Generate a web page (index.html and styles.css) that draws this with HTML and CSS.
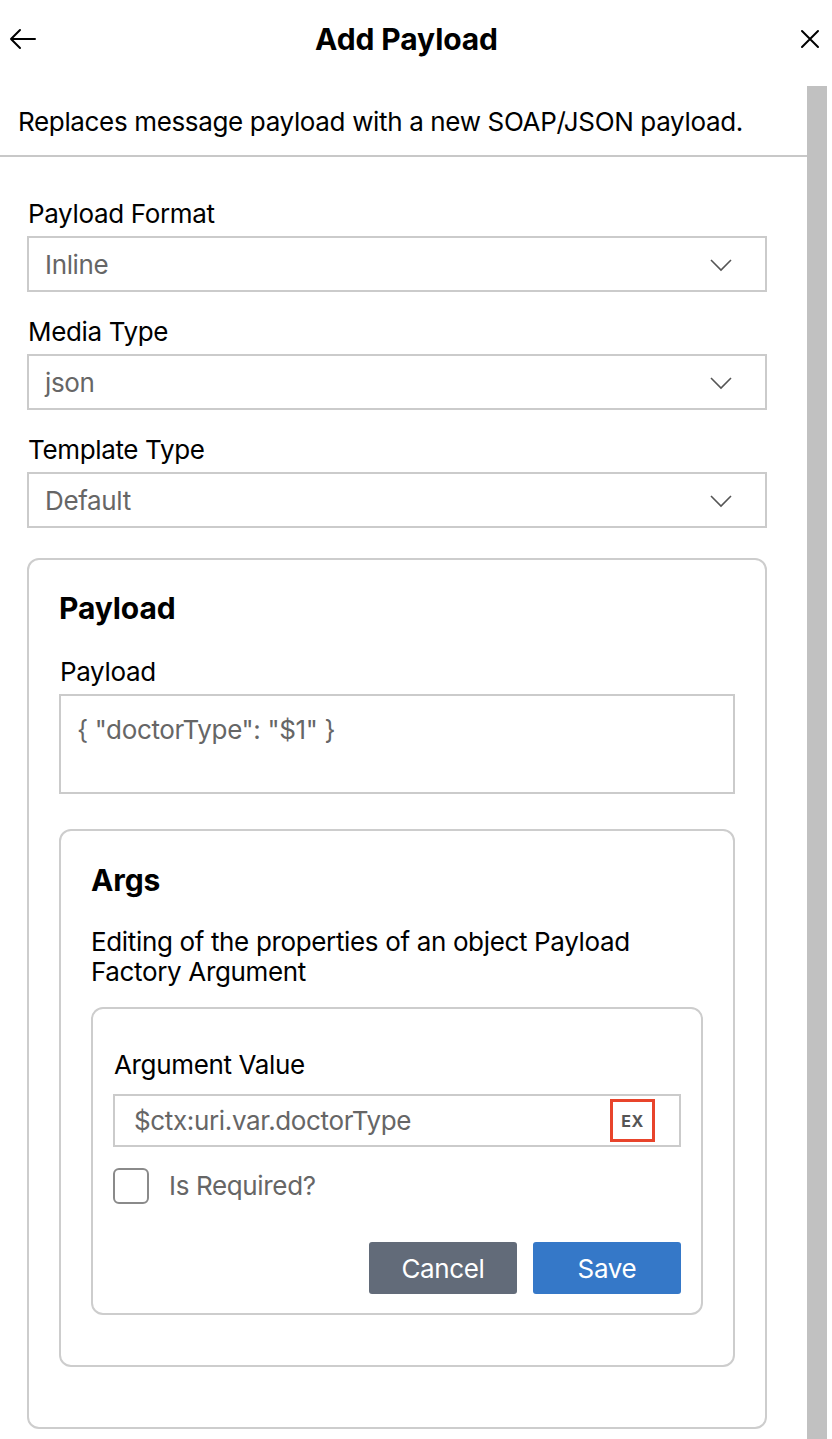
FILE: index.html
```html
<!DOCTYPE html>
<html lang="en">
<head>
<meta charset="utf-8">
<title>Add Payload</title>
<link rel="stylesheet" href="styles.css">
</head>
<body>
<div class="app">
  <header class="header">
    <button class="icon-btn back" aria-label="Back">
      <svg width="28" height="22" viewBox="0 0 28 22"><path d="M26 11H2M11 2L2 11l9 9" fill="none" stroke="#000" stroke-width="2" stroke-linecap="round" stroke-linejoin="round"/></svg>
    </button>
    <h1 class="title">Add Payload</h1>
    <button class="icon-btn close" aria-label="Close">
      <svg width="20" height="20" viewBox="0 0 20 20"><path d="M2 2l16 16M18 2L2 18" fill="none" stroke="#000" stroke-width="2" stroke-linecap="round"/></svg>
    </button>
  </header>
  <div class="scroll">
    <div class="content">
      <p class="desc">Replaces message payload with a new SOAP/JSON payload.</p>
      <div class="form">
        <div class="field">
          <label class="label">Payload Format</label>
          <div class="select"><span>Inline</span><svg class="chev" width="24" height="14" viewBox="0 0 24 14"><path d="M2 2l10 10L22 2" fill="none" stroke="#555" stroke-width="1.6"/></svg></div>
        </div>
        <div class="field">
          <label class="label">Media Type</label>
          <div class="select"><span>json</span><svg class="chev" width="24" height="14" viewBox="0 0 24 14"><path d="M2 2l10 10L22 2" fill="none" stroke="#555" stroke-width="1.6"/></svg></div>
        </div>
        <div class="field">
          <label class="label">Template Type</label>
          <div class="select"><span>Default</span><svg class="chev" width="24" height="14" viewBox="0 0 24 14"><path d="M2 2l10 10L22 2" fill="none" stroke="#555" stroke-width="1.6"/></svg></div>
        </div>

        <section class="card payload-card">
          <h2 class="heading">Payload</h2>
          <label class="label payload-label">Payload</label>
          <div class="textarea">{ "doctorType": "$1" }</div>

          <section class="card args-card">
            <h2 class="heading">Args</h2>
            <p class="args-desc">Editing of the properties of an object Payload Factory Argument</p>

            <div class="card arg-card">
              <label class="label">Argument Value</label>
              <div class="input">
                <span>$ctx:uri.var.doctorType</span>
                <span class="ex">EX</span>
              </div>
              <div class="check-row">
                <span class="checkbox"></span>
                <span class="check-label">Is Required?</span>
              </div>
              <div class="actions">
                <button class="btn cancel">Cancel</button>
                <button class="btn save">Save</button>
              </div>
            </div>
          </section>
        </section>
      </div>
    </div>
    <div class="scrollbar"></div>
  </div>
</div>
</body>
</html>
```

FILE: styles.css
```css
* { box-sizing: border-box; }
html, body { margin: 0; padding: 0; background: #fff; }
body {
  font-family: Inter, "Noto Sans", sans-serif;
  font-size: 26px;
  letter-spacing: -0.35px;
  color: #000;
  height: 1439px;
  overflow: hidden;
}
.app { display: flex; flex-direction: column; height: 1439px; }

.header {
  height: 86px;
  flex: none;
  display: flex;
  align-items: flex-start;
  justify-content: space-between;
  padding: 0 12px 0 9px;
}
.icon-btn {
  background: none;
  border: 0;
  padding: 0;
  display: flex;
  cursor: pointer;
}
.back { margin-top: 28px; width: 28px; }
.close { margin-top: 29px; }
.title {
  margin: 21px 0 0 0;
  padding-right: 24px;
  font-size: 30px;
  font-weight: 700;
  line-height: 36px;
  letter-spacing: -0.1px;
}

.scroll { flex: 1; display: flex; min-height: 0; }
.content { width: 807px; flex: none; }
.scrollbar { width: 20px; background: #c1c1c1; flex: none; }

.desc {
  margin: 0;
  padding: 21px 18px 18px;
  line-height: 30px;
  border-bottom: 2px solid #c8c8c8;
}

.form { padding: 42px 40px 0 27px; }
.field { margin-bottom: 25px; }
.field:nth-child(3) { margin-bottom: 30px; }
.label { display: block; line-height: 30px; margin-left: 1px; margin-bottom: 7px; }
.select {
  height: 56px;
  border: 2px solid #cbcbcb;
  display: flex;
  align-items: center;
  justify-content: space-between;
  padding: 0 32px 0 16px;
  color: #666;
}
.chev { margin-top: 1px; }

.card {
  border: 2px solid #cdcdcd;
  border-radius: 12px;
}
.payload-card { padding: 31px 30px 60px; }
.heading {
  margin: 0;
  font-size: 30px;
  font-weight: 700;
  line-height: 34px;
  letter-spacing: -0.1px;
}
.payload-label { margin-top: 32px; }
.textarea {
  height: 100px;
  border: 2px solid #cbcbcb;
  padding: 19px 16px 0;
  line-height: 30px;
  color: #666;
}

.args-card { margin-top: 35px; padding: 32px 30px 50px; }
.args-desc { margin: 30px 0 20px; line-height: 30px; }

.arg-card { padding: 41px 20px 19px; }
.arg-card .label { margin-bottom: 14px; }
.input {
  height: 53px;
  border: 2px solid #cbcbcb;
  display: flex;
  align-items: center;
  justify-content: space-between;
  padding: 0 24px 0 19px;
  color: #666;
}
.ex {
  width: 45px;
  height: 43px;
  border: 3px solid #e8442b;
  display: flex;
  align-items: center;
  justify-content: center;
  font-size: 16px;
  font-weight: 700;
  color: #555;
  letter-spacing: 0.5px;
}

.check-row { margin-top: 21px; display: flex; align-items: center; gap: 20px; }
.checkbox {
  width: 36px;
  height: 36px;
  border: 2px solid #8a8a8a;
  border-radius: 6px;
  flex: none;
}
.check-label { color: #666; line-height: 30px; }

.actions { margin-top: 38px; display: flex; justify-content: flex-end; gap: 16px; }
.btn {
  width: 148px;
  height: 52px;
  border: 0;
  border-radius: 3px;
  color: #fff;
  font-family: inherit;
  font-size: 26px;
  letter-spacing: -0.35px;
  cursor: pointer;
}
.cancel { background: #626b79; }
.save { background: #3578c8; }
```
